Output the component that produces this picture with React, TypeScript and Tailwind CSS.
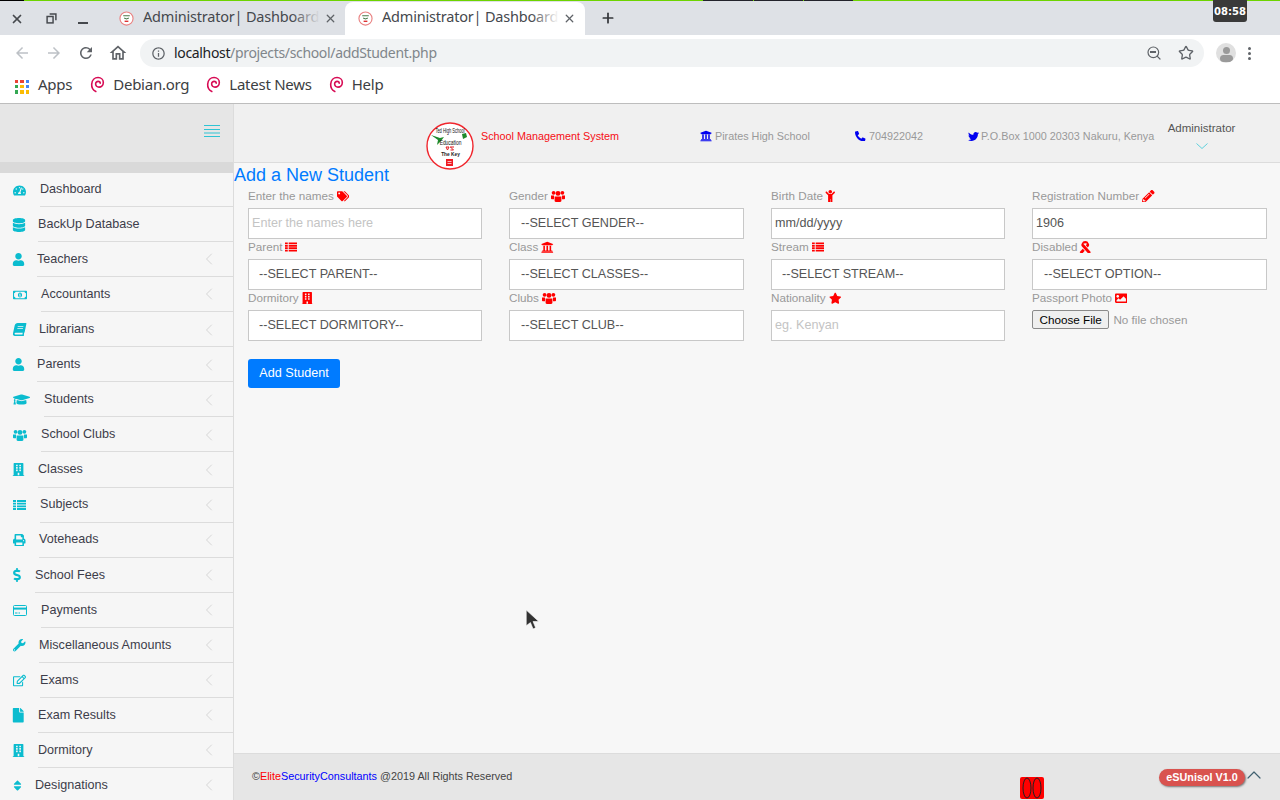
import type { ReactNode } from "react";
import {
  FaBook,
  FaBuilding,
  FaChild,
  FaDatabase,
  FaDollarSign,
  FaFile,
  FaGraduationCap,
  FaImage,
  FaPencilAlt,
  FaPhoneAlt,
  FaPrint,
  FaRegEdit,
  FaRegMoneyBillAlt,
  FaRibbon,
  FaSort,
  FaStar,
  FaTachometerAlt,
  FaTags,
  FaTwitter,
  FaUniversity,
  FaUser,
  FaWrench,
} from "react-icons/fa";
import { ChevronLeft, ChevronUp, Plus, Search, Star, X } from "lucide-react";

// chunky three-person group, the package only has the thin one
function Group({ className }: { className?: string }) {
  return (
    <svg viewBox="0 0 14 12" className={className} fill="currentColor">
      <circle cx="2.6" cy="2.8" r="1.9" />
      <circle cx="11.4" cy="2.8" r="1.9" />
      <circle cx="7" cy="3.4" r="2.4" />
      <path d="M0 5.6h3v3.6H.8C.3 9.2 0 8.9 0 8.4zM14 5.6h-3v3.6h2.2c.5 0 .8-.3.8-.8z" />
      <path d="M3.6 6.4h6.8v4.4c0 .7-.5 1.2-1.2 1.2H4.8c-.7 0-1.2-.5-1.2-1.2z" />
    </svg>
  );
}

function Card({ className }: { className?: string }) {
  return (
    <svg viewBox="0 0 14 11" className={className} fill="none" stroke="currentColor">
      <rect x="0.5" y="0.5" width="13" height="10" rx="1" strokeWidth="1" />
      <path d="M0.5 3.6h13" strokeWidth="2" />
      <path d="M2 8h2.5M5.5 8h1.5" strokeWidth="1" />
    </svg>
  );
}

function Stripes({ className }: { className?: string }) {
  return (
    <svg viewBox="0 0 13 10" className={className} fill="currentColor">
      <path d="M0 0h3v1.9H0zM4 0h9v1.9H4zM0 2.7h3v1.9H0zM4 2.7h9v1.9H4zM0 5.4h3v1.9H0zM4 5.4h9v1.9H4zM0 8.1h3V10H0zM4 8.1h9V10H4z" />
    </svg>
  );
}

const sideItems = [
  { label: "Dashboard", icon: <FaTachometerAlt className="text-[13px]" />, w: "w-[27px]", arrow: false },
  { label: "BackUp Database", icon: <FaDatabase className="-ml-[1px] text-[14px]" />, w: "w-[25px]", arrow: false },
  { label: "Teachers", icon: <FaUser className="-ml-[1px] text-[13px]" />, w: "w-[24px]", arrow: true },
  { label: "Accountants", icon: <FaRegMoneyBillAlt className="text-[14px]" />, w: "w-[28px]", arrow: true },
  { label: "Librarians", icon: <FaBook className="-skew-x-12 text-[13px]" />, w: "w-[26px]", arrow: true },
  { label: "Parents", icon: <FaUser className="-ml-[1px] text-[13px]" />, w: "w-[24px]", arrow: true },
  { label: "Students", icon: <FaGraduationCap className="text-[17px]" />, w: "w-[31px]", arrow: true },
  { label: "School Clubs", icon: <Group className="h-[12px] w-[14px]" />, w: "w-[28px]", arrow: true },
  { label: "Classes", icon: <FaBuilding className="-ml-[1px] text-[13px]" />, w: "w-[25px]", arrow: true },
  { label: "Subjects", icon: <Stripes className="h-[10px] w-[13px]" />, w: "w-[27px]", arrow: true },
  { label: "Voteheads", icon: <FaPrint className="text-[12.5px]" />, w: "w-[26px]", arrow: true },
  { label: "School Fees", icon: <FaDollarSign className="-ml-[3px] text-[14px]" />, w: "w-[22px]", arrow: true },
  { label: "Payments", icon: <Card className="h-[11px] w-[14px]" />, w: "w-[28px]", arrow: true },
  { label: "Miscellaneous Amounts", icon: <FaWrench className="text-[12.5px]" />, w: "w-[26px]", arrow: true },
  { label: "Exams", icon: <FaRegEdit className="text-[13px]" />, w: "w-[27px]", arrow: true },
  { label: "Exam Results", icon: <FaFile className="-ml-[2px] text-[14.5px]" />, w: "w-[25px]", arrow: true },
  { label: "Dormitory", icon: <FaBuilding className="-ml-[1px] text-[13px]" />, w: "w-[25px]", arrow: true },
  { label: "Designations", icon: <FaSort className="-ml-[2.5px] text-[13px]" />, w: "w-[22px]", arrow: true },
];

function Debian() {
  return (
    <svg viewBox="0 0 16 18" className="h-[17px] w-[15px] shrink-0" fill="none" stroke="#d70a53" strokeWidth="1.7" strokeLinecap="round">
      <path d="M6.2 16.5C3 14.8 1.6 11.8 1.8 8.6 2.1 4.5 5 1.6 8.6 1.6c3.3 0 5.6 2.4 5.6 5.3 0 2.9-2.2 4.9-4.6 4.9-2.1 0-3.6-1.5-3.6-3.3 0-1.6 1.2-2.8 2.7-2.8 1.2 0 2.2.8 2.2 2" />
    </svg>
  );
}

function Favicon() {
  return (
    <svg viewBox="0 0 16 16" className="h-[15px] w-[15px] shrink-0">
      <circle cx="8" cy="8" r="7" fill="#fff" stroke="#e98080" strokeWidth="1.2" />
      <path d="M4.5 5h7M5.5 7.5l2.5 1 2.5-1" stroke="#4a7a4a" strokeWidth="1.1" fill="none" />
      <path d="M6 11h4" stroke="#d33" strokeWidth="1.5" />
    </svg>
  );
}

function Tab({ active }: { active?: boolean }) {
  return (
    <div className={active ? "flex h-[33px] w-[240px] items-center rounded-t-[8px] bg-white pl-[13px]" : "flex h-[33px] w-[240px] items-center pl-[14px]"}>
      <Favicon />
      <div className="relative mb-[4px] ml-[9px] w-[177px] overflow-hidden whitespace-nowrap font-['Noto_Sans',sans-serif] text-[14.5px] tracking-[-0.2px] text-[#45484d]">
        Administrator| Dashboard
        <div className={active ? "absolute inset-y-0 right-0 w-[28px] bg-gradient-to-r from-transparent to-white" : "absolute inset-y-0 right-0 w-[28px] bg-gradient-to-r from-transparent to-[#dee1e6]"} />
      </div>
      <X className="ml-[4px] h-[13px] w-[13px] text-[#5f6368]" strokeWidth={2.4} />
    </div>
  );
}

function Bookmark({ label, className }: { label: string; className: string }) {
  return (
    <div className={`flex items-center ${className}`}>
      <Debian />
      <span className="ml-[8px]">{label}</span>
    </div>
  );
}

function Chrome() {
  return (
    <div className="relative h-[104px] shrink-0 border-b border-[#bdbdbd] bg-white font-['Noto_Sans',sans-serif]">
      {/* desktop panel strip bleeding in at the very top */}
      <div className="absolute inset-x-0 top-0 flex h-[1px] bg-[#6dd400]">
        <div className="w-[24px] bg-black" />
        <div className="ml-[679px] w-[50px] bg-[#23232b]" />
        <div className="ml-[1px] w-[49px] bg-[#23232b]" />
        <div className="ml-[1px] w-[49px] bg-[#23232b]" />
      </div>
      <div className="absolute right-[33px] top-0 flex h-[22px] w-[34px] items-center justify-center rounded-b-[3px] bg-[#3a3a3a] font-['DejaVu_Sans',sans-serif] text-[10px] font-bold text-white">
        08:58
      </div>

      <div className="flex h-[35px] items-end bg-[#dee1e6]">
        <div className="flex h-[33px] w-[105px] shrink-0 items-center pl-[10px] text-[#45484d]">
          <X className="h-[14px] w-[14px]" strokeWidth={3} />
          <svg viewBox="0 0 12 12" className="ml-[22px] h-[11px] w-[11px]" fill="none" stroke="#45484d" strokeWidth="1.6">
            <path d="M4 1.2h6.8V8" />
            <rect x="1.2" y="3.8" width="6.5" height="7" />
          </svg>
          <div className="ml-[21px] mt-[8px] h-[2px] w-[10px] bg-[#45484d]" />
        </div>
        <Tab />
        <Tab active />
        <Plus className="mb-[9px] ml-[15px] h-[16px] w-[16px] text-[#33363a]" strokeWidth={2.6} />
      </div>

      <div className="flex h-[36px] items-center">
        <svg viewBox="0 0 24 24" className="ml-[13px] h-[18px] w-[18px]" fill="#bdc1c6">
          <path d="M20 11H7.83l5.59-5.59L12 4l-8 8 8 8 1.41-1.41L7.83 13H20v-2z" />
        </svg>
        <svg viewBox="0 0 24 24" className="ml-[14px] h-[18px] w-[18px]" fill="#bdc1c6">
          <path d="M4 11h12.17l-5.59-5.59L12 4l8 8-8 8-1.41-1.41L16.17 13H4v-2z" />
        </svg>
        <svg viewBox="0 0 24 24" className="ml-[14px] h-[18px] w-[18px]" fill="#5f6368">
          <path d="M17.65 6.35A7.958 7.958 0 0012 4c-4.42 0-7.99 3.58-7.99 8s3.57 8 7.99 8c3.73 0 6.84-2.55 7.73-6h-2.08A5.99 5.99 0 0112 18c-3.31 0-6-2.69-6-6s2.69-6 6-6c1.66 0 3.14.69 4.22 1.78L13 11h7V4l-2.35 2.35z" />
        </svg>
        <svg viewBox="0 0 24 24" className="ml-[13px] h-[20px] w-[20px]" fill="#5f6368">
          <path d="M12 5.69l5 4.5V18h-2v-6H9v6H7v-7.81l5-4.5M12 3L2 12h3v8h6v-6h2v6h6v-8h3L12 3z" />
        </svg>
        <div className="ml-[12px] flex h-[28px] w-[1064px] items-center rounded-full bg-[#f1f3f4] pl-[11px]">
          <svg viewBox="0 0 24 24" className="h-[15px] w-[15px]" fill="#5f6368">
            <path d="M11 7h2v2h-2zm0 4h2v6h-2zm1-9C6.48 2 2 6.48 2 12s4.48 10 10 10 10-4.48 10-10S17.52 2 12 2zm0 18c-4.41 0-8-3.59-8-8s3.59-8 8-8 8 3.59 8 8-3.59 8-8 8z" />
          </svg>
          <span className="mb-[1px] ml-[8px] text-[14px] tracking-[-0.34px] text-[#202124]">
            localhost<span className="text-[#80868b]">/projects/school/addStudent.php</span>
          </span>
          <div className="relative ml-auto mr-[9px] h-[16px] w-[16px] text-[#5f6368]">
            <Search className="h-[16px] w-[16px]" strokeWidth={1.8} />
            <div className="absolute left-[4px] top-[6px] h-[1.5px] w-[6px] bg-[#5f6368]" />
          </div>
          <Star className="ml-[7px] mr-[10px] h-[16px] w-[16px] text-[#5f6368]" strokeWidth={2} />
        </div>
        <div className="ml-[12px] flex h-[20px] w-[20px] flex-col items-center overflow-hidden rounded-full bg-[#e0e0e0]">
          <div className="mt-[4px] h-[7px] w-[7px] rounded-full bg-[#9a9a9a]" />
          <div className="mt-[1px] h-[7px] w-[13px] rounded-full bg-[#9a9a9a]" />
        </div>
        <div className="ml-[12px] flex flex-col gap-[2px]">
          <div className="h-[3px] w-[3px] rounded-full bg-[#5f6368]" />
          <div className="h-[3px] w-[3px] rounded-full bg-[#5f6368]" />
          <div className="h-[3px] w-[3px] rounded-full bg-[#5f6368]" />
        </div>
      </div>

      <div className="flex h-[32px] items-center pb-[6px] text-[15px] tracking-[-0.25px] text-[#3c4043]">
        <div className="ml-[15px] mt-[5px] grid h-[14px] w-[14px] grid-cols-3 gap-[2px]">
          <div className="bg-[#ea4335]" />
          <div className="bg-[#ea4335]" />
          <div className="bg-[#4285f4]" />
          <div className="bg-[#34a853]" />
          <div className="bg-[#fbbc05]" />
          <div className="bg-[#4285f4]" />
          <div className="bg-[#34a853]" />
          <div className="bg-[#fbbc05]" />
          <div className="bg-[#fbbc05]" />
        </div>
        <span className="ml-[9px]">Apps</span>
        <Bookmark label="Debian.org" className="ml-[18px]" />
        <Bookmark label="Latest News" className="ml-[17px]" />
        <Bookmark label="Help" className="ml-[17px]" />
      </div>
    </div>
  );
}

function Sidebar() {
  return (
    <aside className="w-[234px] shrink-0 overflow-hidden border-r border-[#dcdcdc] bg-[#f6f6f6]">
      <div className="flex h-[58px] items-center justify-end bg-[#e6e6e6] pb-[4px] pr-[13px]">
        <svg viewBox="0 0 16 12" className="h-[12px] w-[16px]" stroke="#2fc4d4" strokeWidth="1">
          <path d="M0 0.5h16M0 4.5h16M0 8h16M0 11.5h16" />
        </svg>
      </div>
      <div className="h-[11px] bg-[#d9d9d9]" />
      {sideItems.map((item, i) => (
        <div key={item.label} className={i === 0 ? "flex h-[34px] pl-[13px]" : "flex h-[35.07px] pl-[13px]"}>
          <div className={`flex shrink-0 items-center text-[#0bbccf] ${item.w}`}>{item.icon}</div>
          <div
            className={
              i === 0
                ? "flex flex-1 items-center border-b border-[#dcdcdc] pb-[0.5px] pr-[14px] text-[12.6px] text-[#3d3d4a]"
                : "flex flex-1 items-center border-b border-[#dcdcdc] pr-[14px] pt-[0.66px] text-[12.6px] text-[#3d3d4a]"
            }
          >
            <span>{item.label}</span>
            {item.arrow && <ChevronLeft className="ml-auto h-[20px] w-[20px] text-[#cfcfcf]" strokeWidth={1} />}
          </div>
        </div>
      ))}
    </aside>
  );
}

function Logo() {
  return (
    <svg viewBox="0 0 48 48" className="mt-[12px] h-[48px] w-[48px] shrink-0 self-start font-['Liberation_Sans',sans-serif]">
      <circle cx="24" cy="24" r="23" fill="#fff" stroke="#f0262d" strokeWidth="1.4" />
      <text transform="translate(24 10.5) scale(0.62 1)" textAnchor="middle" fontSize="6.5" fill="#111">Ted High School</text>
      <path d="M5 13l9 3 4-1-3 4-4 4 1-5z" fill="#1d8a2c" />
      <path d="M36 12l4-1 1 4-4 2z" fill="#1d8a2c" />
      <text transform="translate(24.5 22.5) scale(0.7 1)" textAnchor="middle" fontSize="7" fill="#111">Education</text>
      <path d="M20 25h3l-1.5 3zM24 25h4M24.5 25l3 3h-3" fill="none" stroke="#e01b22" strokeWidth="1" />
      <text x="24.5" y="33.5" textAnchor="middle" fontSize="4.8" fontWeight="bold" fill="#222">The Key</text>
      <rect x="20" y="37" width="7" height="7" fill="#ef1c24" />
      <path d="M21.5 39.5h4M21.5 41.5h4" stroke="#fff" strokeWidth="0.7" />
    </svg>
  );
}

function Header() {
  return (
    <header className="relative z-10 flex h-[59px] shrink-0 items-center border-b border-[#dcdcdc] bg-[#f0f0f0] pl-[192px] pt-[6px] text-[10.8px] text-[#999]">
      <Logo />
      <span className="ml-[7px] w-[219px] text-[#f60f14]">School Management System</span>
      <FaUniversity className="text-[12px] text-[#0000f0]" />
      <span className="ml-[3px] w-[140px]">Pirates High School</span>
      <FaPhoneAlt className="text-[10.5px] text-[#0000f0]" />
      <span className="ml-[3.5px] w-[99px]">704922042</span>
      <FaTwitter className="text-[11px] text-[#0000f0]" />
      <span className="ml-[2px] w-[186px]">P.O.Box 1000 20303 Nakuru, Kenya</span>
      <div className="-mt-[3px] flex w-[69px] flex-col items-center">
        <span className="whitespace-nowrap text-[11.5px] text-[#555]">Administrator</span>
        <svg viewBox="0 0 12 6" className="mt-[5px] h-[6px] w-[12px]" fill="none" stroke="#5fd0dc" strokeWidth="1">
          <path d="M0.5 0.5L6 5.5l5.5-5" />
        </svg>
      </div>
    </header>
  );
}

function Label({ text, icon }: { text: string; icon: ReactNode }) {
  return (
    <label className="flex h-[20px] items-center gap-[3px] pb-[4px] text-[11.7px] text-[#999]">
      {text}
      <span className="text-[12.5px] text-[#ff0000]">{icon}</span>
    </label>
  );
}

function Pick({ text, tight }: { text: string; tight?: boolean }) {
  return (
    <select
      className={
        tight
          ? "h-[31px] w-full appearance-none border border-[#c8c8c8] bg-white pb-[1px] pl-[10px] text-[12.6px] text-[#555]"
          : "h-[31px] w-full appearance-none border border-[#c8c8c8] bg-white pb-[1px] pl-[11px] text-[12.6px] text-[#555]"
      }
    >
      <option>{text}</option>
    </select>
  );
}

function Text({ placeholder, value }: { placeholder?: string; value?: string }) {
  return (
    <input
      type="text"
      placeholder={placeholder}
      defaultValue={value}
      className="h-[31px] w-full border border-[#c8c8c8] bg-white px-[3px] pb-[2px] text-[12.6px] text-[#555] placeholder:text-[#c4c4c4]"
    />
  );
}

function Form() {
  return (
    <main className="flex-1 bg-[#f7f7f7]">
      <h2 className="mt-[2px] text-[18px] leading-[21px] text-[#007bff]">Add a New Student</h2>
      <form className="pl-[14px] pr-[13px] pt-[2px]">
        <div className="grid grid-cols-[234px_235px_234px_235px] gap-x-[27px]">
          <div>
            <Label text="Enter the names" icon={<FaTags />} />
            <Text placeholder="Enter the names here" />
          </div>
          <div>
            <Label text="Gender" icon={<Group className="h-[12px] w-[14px]" />} />
            <Pick text="--SELECT GENDER--" />
          </div>
          <div>
            <Label text="Birth Date" icon={<FaChild className="-mx-[2px]" />} />
            <Text value="mm/dd/yyyy" />
          </div>
          <div>
            <Label text="Registration Number" icon={<FaPencilAlt />} />
            <Text value="1906" />
          </div>
          <div>
            <Label text="Parent" icon={<Stripes className="h-[10px] w-[12px]" />} />
            <Pick tight text="--SELECT PARENT--" />
          </div>
          <div>
            <Label text="Class" icon={<FaUniversity />} />
            <Pick text="--SELECT CLASSES--" />
          </div>
          <div>
            <Label text="Stream" icon={<Stripes className="h-[10px] w-[12px]" />} />
            <Pick tight text="--SELECT STREAM--" />
          </div>
          <div>
            <Label text="Disabled" icon={<FaRibbon className="-mx-[1px]" />} />
            <Pick text="--SELECT OPTION--" />
          </div>
          <div>
            <Label text="Dormitory" icon={<FaBuilding className="-mx-[1px]" />} />
            <Pick tight text="--SELECT DORMITORY--" />
          </div>
          <div>
            <Label text="Clubs" icon={<Group className="h-[12px] w-[14px]" />} />
            <Pick text="--SELECT CLUB--" />
          </div>
          <div>
            <Label text="Nationality" icon={<FaStar />} />
            <Text placeholder="eg. Kenyan" />
          </div>
          <div>
            <Label text="Passport Photo" icon={<FaImage />} />
            <input
              type="file"
              className="block w-full text-[11.7px] text-[#999] file:mr-[4px] file:h-[19px] file:rounded-[2px] file:border file:border-[#8a8a8a] file:bg-[#efefef] file:px-[6.5px] file:text-[11.7px] file:text-black"
            />
          </div>
        </div>
        <button type="button" className="mt-[18px] h-[29px] w-[92px] rounded-[3px] bg-[#007bff] pb-[1px] text-[12.6px] text-white">
          Add Student
        </button>
      </form>
    </main>
  );
}

function Footer() {
  return (
    <footer className="flex h-[47px] shrink-0 items-center border-t border-[#dcdcdc] bg-[#e6e6e6] pl-[18px] text-[10.8px] text-[#444]">
      <span className="mb-[2px] w-[260px] shrink-0 whitespace-nowrap">
        ©<span className="text-[#ff0000]">Elite</span>
        <span className="text-[#0000ff]">SecurityConsultants</span> @2019 All Rights Reserved
      </span>
      <svg viewBox="0 0 24 22" className="ml-[508px] mt-[21px] h-[22px] w-[24px] shrink-0">
        <rect width="24" height="22" rx="2" fill="#ff0000" />
        <ellipse cx="7" cy="11" rx="4" ry="10" fill="none" stroke="#222" strokeWidth="1" />
        <ellipse cx="17" cy="11" rx="4" ry="10" fill="none" stroke="#222" strokeWidth="1" />
      </svg>
      <span className="ml-[115px] flex h-[17px] w-[86px] shrink-0 items-center justify-center rounded-full bg-[#d9534f] text-[10.8px] font-bold text-white shadow-[1px_1px_2px_#777]">
        eSUnisol V1.0
      </span>
      <ChevronUp className="-ml-[3px] -mt-[5px] h-[24px] w-[24px] text-[#41606f]" strokeWidth={1.2} />
    </footer>
  );
}

export default function App() {
  return (
    <div className="relative flex h-[800px] w-[1280px] flex-col overflow-hidden font-['Liberation_Sans',sans-serif]">
      <Chrome />
      <div className="flex min-h-0 flex-1">
        <Sidebar />
        <div className="flex min-w-0 flex-1 flex-col">
          <Header />
          <Form />
          <Footer />
        </div>
      </div>
      {/* mouse pointer caught in the shot */}
      <svg viewBox="0 0 13 20" className="absolute left-[525px] top-[610px] h-[21px] w-[14px]">
        <path d="M1 0v15l4-3 2.5 6 2.5-1-2.5-6H13z" fill="#333" stroke="#fff" strokeWidth="0.6" />
      </svg>
    </div>
  );
}
